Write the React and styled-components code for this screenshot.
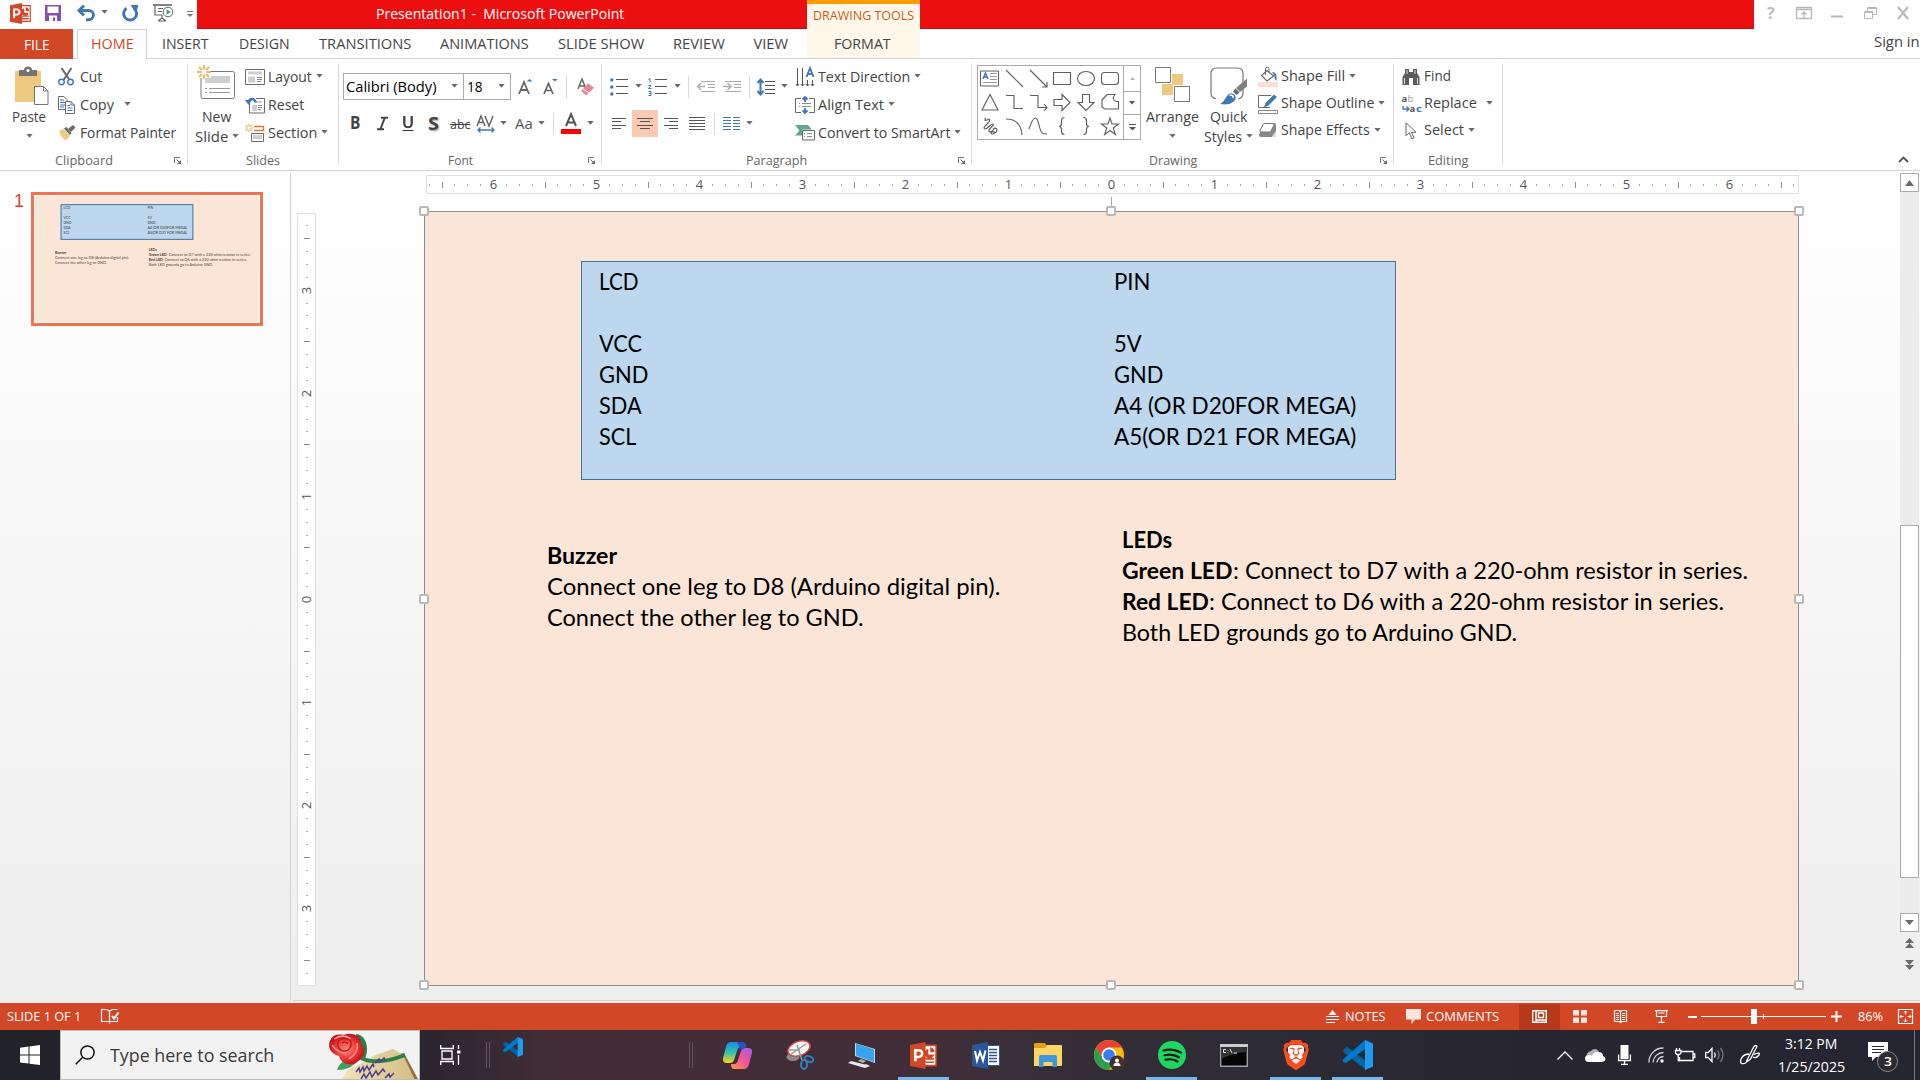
import React, { useLayoutEffect, useRef, useState } from "react";
import styled, { createGlobalStyle, css } from "styled-components";
import { SiBrave } from "react-icons/si";

const Global = createGlobalStyle`
  body { margin: 0; background: #fff; overflow: hidden; }
  * { box-sizing: border-box; }
  svg { display: block; flex-shrink: 0; overflow: visible; }
`;

/* ---------- text ---------- */

const UI = '"Open Sans", "Noto Sans", sans-serif';
const BODY = 'Lato, "Open Sans", sans-serif';

const TextBox = styled.span`
  display: block;
  flex-shrink: 0;
  width: ${(p) => p.$w}px;
  margin-left: ${(p) => p.$l || 0}px;
  margin-top: ${(p) => p.$dy || 0}px;
  color: ${(p) => p.$c || "#444"};
  font: ${(p) => p.$weight || 400} ${(p) => p.$s || 14.5}px ${(p) => p.$f || UI};
  line-height: ${(p) => p.$lh || 20}px;
  height: ${(p) => p.$lh || 20}px;
  white-space: pre;
`;
const TextRun = styled.span`
  display: inline-block;
  transform-origin: 0 50%;
`;

function T({ w, l, c, s, f, lh, dy, weight, children }) {
  const ref = useRef(null);
  const [k, setK] = useState(1);
  useLayoutEffect(() => {
    setK(w / ref.current.offsetWidth);
  }, [w]);
  return (
    <TextBox $w={w} $l={l} $c={c} $s={s} $f={f} $lh={lh} $dy={dy} $weight={weight}>
      <TextRun ref={ref} style={{ transform: `scaleX(${k})` }}>{children}</TextRun>
    </TextBox>
  );
}

/* ---------- small shared parts ---------- */

const Slot = styled.div`
  flex-shrink: 0;
  margin-left: ${(p) => p.$l || 0}px;
  width: ${(p) => p.$w}px;
  height: ${(p) => (p.$h ? p.$h + "px" : "auto")};
  display: flex;
  align-items: center;
  justify-content: center;
  background: ${(p) => p.$bg || "transparent"};
`;
const CaretBox = styled.svg`
  margin-left: ${(p) => p.$l || 0}px;
  margin-top: -2px;
`;
const Caret = ({ l, c = "#6a6a6a" }) => (
  <CaretBox $l={l} width="7" height="4" viewBox="0 0 7 4"><path d="M.3 0h6.400L3.500 3.700z" fill={c} /></CaretBox>
);
const Divider = styled.div`
  flex-shrink: 0;
  width: 1px;
  height: 22px;
  margin-left: ${(p) => p.$l}px;
  background: #dadada;
`;
const G = ({ w, h, vb, children, ...r }) => (
  <svg width={w} height={h} viewBox={vb || `0 0 ${w} ${h}`} fill="none" {...r}>{children}</svg>
);

/* ---------- title bar ---------- */

const App0 = styled.div`
  width: 1920px;
  height: 1080px;
  display: flex;
  flex-direction: column;
  overflow: hidden;
  background: #fff;
`;
const TitleBar = styled.header`
  height: 29px;
  display: flex;
`;
const Quick = styled.div`
  width: 197px;
  display: flex;
  align-items: center;
  padding-bottom: 3px;
`;
const RedBar = styled.div`
  width: 1557px;
  background: #eb0f0f;
  border-bottom: 1px solid #c40a10;
  display: flex;
  padding-top: 4px;
`;
const ContextCaption = styled.div`
  width: 113px;
  height: 29px;
  margin: -4px 0 0 183px;
  border-top: 4px solid #ff9c00;
  background: #fff7ea;
  padding: 2px 0 0 6px;
`;
const WinButtons = styled.div`
  flex: 1;
  display: flex;
  align-items: center;
  padding-bottom: 3px;
`;

const PptIcon = ({ s = 21 }) => (
  <G w={s} h={s} vb="0 0 28 28">
    <path d="M15 3.5h12v21H15z" fill="#fff" stroke="#d24726" strokeWidth="1.6" />
    <path d="M19 7v6h6a5 5 0 1 1-6-6zM21 5.500a5 5 0 0 1 4.500 5H21z" fill="#d24726" />
    <path d="M16 17.500h9M16 21h9" stroke="#d24726" strokeWidth="1.700" />
    <path d="M0 3l16-3v28L0 25z" fill="#d24726" />
    <path d="M5.500 20V8.500h3.600a3.500 3.500 0 0 1 0 7H5.500" stroke="#fff" strokeWidth="2.600" />
  </G>
);

function Title() {
  return (
    <TitleBar>
      <Quick>
        <Slot $l={10} $w={21}><PptIcon /></Slot>
        <Slot $l={14} $w={16}>
          <G w={16} h={16}><path d="M0 0h16v16H0z" fill="#8552a5" /><path d="M2.500 1.500h11v6.500h-11zM4 10.500h8v5.500h-2v-3.500H8V16H4z" fill="#fff" /></G>
        </Slot>
        <Slot $l={16} $w={19}>
          <G w={19} h={16}><path d="M2 5.500h9.500a5 4.600 0 0 1 0 9.200H9" stroke="#3f78b5" strokeWidth="2.900" /><path d="M7 .5L2 5.500l5 5" stroke="#3f78b5" strokeWidth="2.900" /></G>
        </Slot>
        <Caret l={5} />
        <Slot $l={14} $w={17}>
          <G w={17} h={17}><path d="M11.800 3.200A6.500 6.500 0 1 1 4.500 3.200" stroke="#3f78b5" strokeWidth="3" /><path d="M8.500 0h7.500v1.500L14 8z" fill="#3f78b5" /></G>
        </Slot>
        <Slot $l={14} $w={21}>
          <G w={21} h={18}>
            <path d="M0 1h19" stroke="#666" strokeWidth="1.600" /><path d="M2 1v10h7M5 4.500h5M5 7.500h4M9 11v4M5 17l4-3 4 3M5 17h8" stroke="#666" strokeWidth="1.200" />
            <circle cx="15" cy="8" r="4.800" fill="#fff" stroke="#666" /><path d="M13.500 5.200v5.600l4.500-2.800z" fill="#4b9c7d" />
          </G>
        </Slot>
        <Slot $l={12} $w={7}><G w={6} h={7}><path d="M0 1.500h6" stroke="#777" /><path d="M0 4h6L3 7z" fill="#777" /></G></Slot>
      </Quick>
      <RedBar>
        <T l={179} w={248} s={14.5} c="#fff">{"Presentation1 -  Microsoft PowerPoint"}</T>
        <ContextCaption><T w={101} s={12.5} c="#cf5b12">DRAWING TOOLS</T></ContextCaption>
      </RedBar>
      <WinButtons>
        <T l={13} w={8} s={16} weight={700} c="#bdbdbd">?</T>
        <Slot $l={21} $w={16}><G w={16} h={12}><path d="M.5.5h15v11H.5zM.5 2.500h15M8 11V5M5.500 7.500L8 5l2.500 2.500" stroke="#b8b8b8" strokeWidth="1.300" /></G></Slot>
        <Slot $l={19} $w={12}><G w={12} h={12}><path d="M0 9.500h12" stroke="#b8b8b8" strokeWidth="2" /></G></Slot>
        <Slot $l={21} $w={13}><G w={13} h={12}><path d="M.5 5h8v6.500h-8zM3.500 5V1h9v6.500h-4" stroke="#b8b8b8" /><path d="M.5 5h8M3.500 1h9" stroke="#b8b8b8" strokeWidth="2" /></G></Slot>
        <Slot $l={20} $w={12}><G w={12} h={12}><path d="M1 0l10 12M11 0L1 12" stroke="#b8b8b8" strokeWidth="2" /></G></Slot>
      </WinButtons>
    </TitleBar>
  );
}

/* ---------- tabs ---------- */

const TabRow = styled.nav`
  height: 30px;
  display: flex;
  border-bottom: 1px solid #d2d2d2;
`;
const Tab = styled.div`
  width: ${(p) => p.$w}px;
  height: ${(p) => (p.$kind ? 30 : 29)}px;
  display: flex;
  justify-content: center;
  padding-top: 4px;
  ${(p) => p.$kind === "file" && css`background: #d24726; margin-right: 4px; padding-top: 5px;`}
  ${(p) => p.$kind === "active" && css`background: #fff; border: 1px solid #d2d2d2; border-bottom: 0; padding-top: 3px;`}
  ${(p) => p.$kind === "context" && css`background: #fff7ea; margin-left: 5px; height: 29px; padding-right: 2px;`}
`;
const SignIn = styled.div`
  margin-left: auto;
  padding-top: 3px;
`;
const TABS = [
  ["FILE", 73, 26, "file", "#fff"], ["HOME", 70, 43, "active", "#d24726"], ["INSERT", 76, 47],
  ["DESIGN", 82, 51], ["TRANSITIONS", 120, 92], ["ANIMATIONS", 119, 89], ["SLIDE SHOW", 114, 86],
  ["REVIEW", 82, 52], ["VIEW", 62, 35], ["FORMAT", 113, 57, "context"],
];
const Tabs = () => (
  <TabRow>
    {TABS.map(([t, w, tw, kind, c]) => (
      <Tab key={t} $w={w} $kind={kind}><T w={tw} s={14.7} c={c}>{t}</T></Tab>
    ))}
    <SignIn><T w={46}>Sign in</T></SignIn>
  </TabRow>
);

/* ---------- ribbon ---------- */

const RibbonBox = styled.section`
  height: 112px;
  padding-top: 4px;
  display: flex;
  border-bottom: 1px solid #d2d2d2;
`;
const GroupBox = styled.div`
  width: ${(p) => p.$w}px;
  height: 102px;
  border-right: 1px solid #dcdcdc;
  flex-shrink: 0;
`;
const GroupBody = styled.div`
  height: 90px;
  display: flex;
  align-items: flex-start;
`;
const GroupFoot = styled.div`
  height: 14px;
  display: flex;
  align-items: center;
  padding-right: 6px;
`;
const Launcher = styled.svg`
  margin-left: auto;
`;
const Group = ({ w, label, at, lw, more = true, children }) => (
  <GroupBox $w={w}>
    <GroupBody>{children}</GroupBody>
    <GroupFoot>
      <T l={at} w={lw} s={13} c="#666" lh={16}>{label}</T>
      {more && <Launcher width="7" height="7" viewBox="0 0 7 7"><path d="M.5 6V.5H6" stroke="#777" fill="none" /><path d="M7 3v4H3z" fill="#666" /><path d="M2.500 2.500L6 6" stroke="#666" /></Launcher>}
    </GroupFoot>
  </GroupBox>
);
const Big = styled.div`
  width: ${(p) => p.$w}px;
  margin-left: ${(p) => p.$l}px;
  display: flex;
  flex-direction: column;
  align-items: center;
  flex-shrink: 0;
`;
const BigIcon = styled.div`
  height: 44px;
  padding-top: ${(p) => p.$t || 4}px;
  padding-left: ${(p) => p.$x || 0}px;
`;
const Line = styled.div`
  height: 20px;
  display: flex;
  align-items: center;
`;
const Col = styled.div`
  margin-left: ${(p) => p.$l || 0}px;
  flex-shrink: 0;
  width: ${(p) => (p.$w ? p.$w + "px" : "auto")};
`;
const CmdBox = styled.div`
  height: ${(p) => p.$h}px;
  display: flex;
  align-items: center;
`;
const Cmd = ({ icon, iw = 20, gap = 3, dy = 0, label, w, caret, h = 28 }) => (
  <CmdBox $h={h}>
    <Slot $w={iw}>{icon}</Slot>
    <T l={gap} w={w} dy={dy}>{label}</T>
    {caret && <Caret l={caret} />}
  </CmdBox>
);
const Tools = styled.div`
  height: 27px;
  display: flex;
  align-items: center;
  margin-top: 10px;
`;
const Combo = styled.div`
  width: ${(p) => p.$w}px;
  height: 27px;
  margin-left: ${(p) => p.$l}px;
  border: 1px solid #ababab;
  display: flex;
  align-items: center;
  justify-content: space-between;
  padding: 0 5px 0 ${(p) => p.$p}px;
  flex-shrink: 0;
`;
const gy = "#6a6a6a";
const bl = "#3f78b5";

const PasteIcon = (
  <G w={35} h={38}>
    <path d="M1 4h26v31H1z" fill="#edc87e" />
    <path d="M5 3h5a4 3.500 0 0 1 8 0h5v6H5z" fill="#737373" /><circle cx="14" cy="3.500" r="1.500" fill="#fff" />
    <path d="M20.500 19.500h9l4.500 4.500v13.500H20.500z" fill="#fff" stroke="#737373" /><path d="M29.500 19.500V24H34" stroke="#737373" />
  </G>
);
const CutIcon = (
  <G w={17} h={18}><path d="M3.500 0l8 12M13.500 0l-8 12" stroke={gy} strokeWidth="2" /><circle cx="3.500" cy="14" r="2.700" stroke={bl} strokeWidth="1.400" /><circle cx="12.500" cy="14" r="2.700" stroke={bl} strokeWidth="1.400" /></G>
);
const CopyIcon = (
  <G w={17} h={18}>
    <path d="M.5.5h5.500l3 3v10H.5z" fill="#fff" stroke={gy} /><path d="M2 4h4M2 6.500h5M2 9h5M2 11h4" stroke={bl} />
    <path d="M7.500 5.500H13l3.500 3.500v8.500h-9z" fill="#fff" stroke={gy} /><path d="M13 5.500V9h3.500" stroke={gy} /><path d="M9.500 9.500h2.500M9.500 12h5M9.500 14.500h5" stroke={bl} />
  </G>
);
const PainterIcon = (
  <G w={18} h={16}><path d="M1 6l5-2 6 7-4 4.500C5 14 2.500 11 1 6z" fill="#edc87e" /><path d="M6 3.500l2.500-1.500 5 6-1.500 2z" fill={gy} /><path d="M10 4l5-4 2.500 2.500L13 7z" fill={gy} /></G>
);
const Sun = ({ x, y, s = 1 }) => (
  <path transform={`translate(${x} ${y}) scale(${s})`} d="M0-7V-2.500M0 7V2.500M-7 0H-2.500M7 0H2.500M-5-5L-2-2M5 5L2 2M5-5L2-2M-5 5L-2 2" stroke="#e9b765" strokeWidth="1.900" />
);
const NewSlideIcon = (
  <G w={39} h={35}>
    <rect x="4" y="6.500" width="33.500" height="27" rx="2" fill="#fff" stroke="#777" /><path d="M8 11h25v7H8z" fill="#cfcfcf" />
    <path d="M8 23.500h2M12 23.500h21M8 27.500h2M12 27.500h21" stroke="#999" />
    <path d="M0 2h14v11H0z" fill="#fff" /><Sun x={7} y={7} />
  </G>
);
const LayoutIcon = (
  <G w={20} h={16}><path d="M.5.500h19v15H.5z" stroke={gy} /><path d="M3 2.500h14v3H3zM3 7.500h7v6H3z" fill="#cfcfcf" /><path d="M12 8.500h5M12 10.500h5M12 12.500h4" stroke="#888" /></G>
);
const ResetIcon = (
  <G w={20} h={17}><path d="M4.500 5v11h15V1.500H11" stroke={gy} /><path d="M11 4h6v2h-6zM7 8h5v6H7z" fill="#cfcfcf" /><path d="M13 8.500h4M13 10.500h4M13 12.500h3" stroke="#888" /><path d="M11 5.500C9 .5 4.500 1 3.500 5" stroke={bl} strokeWidth="2.200" /><path d="M0 3h7L3.500 8z" fill={bl} /></G>
);
const SectionIcon = (
  <G w={20} h={18}><path d="M9 2.500h9.500v4H9" stroke="#e0792c" strokeWidth="1.400" /><Sun x={4} y={4} s={0.6} /><path d="M6.500 9.500h12v8h-12z" stroke={gy} /><path d="M8 11h9v4H8z" fill="#cfcfcf" /></G>
);
const lines = (arr, c = "#555") => arr.map(([x1, x2, y], i) => <path key={i} d={`M${x1} ${y}.5H${x2}`} stroke={c} strokeWidth="1" />);

function Ribbon() {
  return (
    <RibbonBox>
      <Group w={188} label="Clipboard" at={55} lw={58}>
        <Big $l={5} $w={48}>
          <BigIcon $x={4}>{PasteIcon}</BigIcon>
          <Line><T w={34}>Paste</T></Line>
          <Line><Caret /></Line>
        </Big>
        <Col $l={5}>
          <Cmd iw={17} gap={5} icon={CutIcon} label="Cut" w={22} />
          <Cmd iw={17} gap={5} icon={CopyIcon} label="Copy" w={34} caret={10} dy={-1} />
          <Cmd iw={18} gap={4} icon={PainterIcon} label="Format Painter" w={96} />
        </Col>
      </Group>

      <Group w={151} label="Slides" at={58} lw={34} more={false}>
        <Big $l={6} $w={45}>
          <BigIcon $t={2}>{NewSlideIcon}</BigIcon>
          <Line><T w={29}>New</T></Line>
          <Line><T w={33}>Slide</T><Caret l={4} /></Line>
        </Big>
        <Col $l={6}>
          <Cmd icon={LayoutIcon} label="Layout" w={44} caret={4} />
          <Cmd icon={ResetIcon} label="Reset" w={36} dy={-1} />
          <Cmd icon={SectionIcon} label="Section" w={49} caret={4} />
        </Col>
      </Group>

      <Group w={263} label="Font" at={109} lw={25}>
        <Col>
          <Tools>
            <Combo $w={121} $l={4} $p={2}><T w={91} c="#000" s={14.5}>Calibri (Body)</T><Caret /></Combo>
            <Combo $w={48} $l={-1} $p={3}><T w={16} c="#000">18</T><Caret /></Combo>
            <Slot $l={7} $w={15}><G w={15} h={16}><path d="M1 15L6 3l5 12M2.800 11h6.400" stroke="#666" strokeWidth="1.800" /><path d="M8.500 2.500L11.500 0l3 2.500z" fill={bl} /></G></Slot>
            <Slot $l={10} $w={15}><G w={15} h={16}><path d="M1 15L5.500 4.500 10 15M2.600 11.500h5.800" stroke="#666" strokeWidth="1.700" /><path d="M9 0h5.500l-2.700 2.500z" fill={bl} /></G></Slot>
            <Divider $l={8} />
            <Slot $l={9} $w={18}><G w={17} h={18}><path d="M1 11L5 1l4 10M2.500 8h5" stroke="#666" strokeWidth="1.500" /><path d="M11 5.500l6 4-7.500 8L4 13z" fill="#e8849a" /><path d="M6 11l6 4" stroke="#fff" /></G></Slot>
          </Tools>
          <Tools>
            <T l={11} w={10} weight={700} s={17} dy={-2}>B</T>
            <Slot $l={17} $w={11}><G w={11} h={13}><path d="M4 .8h7M0 12.200h7M7.700 1L3.500 12" stroke="#444" strokeWidth="2" /></G></Slot>
            <Slot $l={13} $w={13}><G w={12} h={16}><path d="M2.300 0v7.500a3.700 3.700 0 0 0 7.400 0V0" stroke="#444" strokeWidth="2.300" /><path d="M.5 14.500h11" stroke="#444" strokeWidth="1.200" /></G></Slot>
            <Shadowed><T l={14} w={11} weight={700} s={18} dy={-2}>S</T></Shadowed>
            <Slot $l={11} $w={20}><T w={20} s={13}><s>abc</s></T></Slot>
            <Slot $l={7} $w={18}><G w={18} h={18}><path d="M0 11L4 1l4 10M1.500 7.500h5M8 1l4 10 4-10" stroke="#666" strokeWidth="1.500" /><path d="M1 15h16M3.500 12.500L1 15l2.500 2.500M14.500 12.500L17 15l-2.500 2.500" stroke={bl} strokeWidth="1.300" /></G></Slot>
            <Caret l={5} />
            <T l={8} w={18} s={15} c="#555" dy={-2}>Aa</T>
            <Caret l={5} />
            <Divider $l={8} />
            <Slot $l={7} $w={20}><G w={20} h={20}><path d="M5 12L10 0l5 12M6.500 8.500h7" stroke="#555" strokeWidth="2" /><path d="M0 15h20v5H0z" fill="#f00" /></G></Slot>
            <Caret l={6} />
          </Tools>
        </Col>
      </Group>

      <Group w={370} label="Paragraph" at={144} lw={61}>
        <Col $w={193}>
          <Tools>
            <Slot $l={8} $w={18}><G w={18} h={18}>{[2, 9, 16].map((y) => <circle key={y} cx="1.800" cy={y} r="1.700" fill={bl} />)}{lines([[6, 18, 1], [6, 18, 8], [6, 18, 15]])}</G></Slot>
            <Caret l={7} />
            <Slot $l={6} $w={19}><G w={19} h={18}><path d="M.5 1.500L2 .5v4M.5 7.500h2.500L.5 10.500H3.500M.5 13.500h2.500v4H.5M1 15.500h2" stroke={bl} />{lines([[7, 19, 1], [7, 19, 8], [7, 19, 15]])}</G></Slot>
            <Caret l={7} />
            <Divider $l={7} />
            <Slot $l={8} $w={18}><G w={18} h={12}><path d="M0 5.500h8M4 2L.7 5.500 4 9" stroke="#b0b0b0" strokeWidth="1.600" />{lines([[4, 18, 0], [11, 18, 3], [11, 18, 6], [4, 18, 10]], "#a9a9a9")}</G></Slot>
            <Slot $l={8} $w={18}><G w={18} h={12}><path d="M0 5.500h8M4.500 2L8 5.500 4.500 9" stroke="#b0b0b0" strokeWidth="1.600" />{lines([[2, 18, 0], [11, 18, 3], [11, 18, 6], [2, 18, 10]], "#a9a9a9")}</G></Slot>
            <Divider $l={8} />
            <Slot $l={7} $w={18}><G w={18} h={18}><path d="M3.500 2v14M.5 5l3-3.500 3 3.500M.5 13l3 3.500 3-3.500" stroke={bl} strokeWidth="2" />{lines([[8, 18, 3], [8, 18, 7], [8, 18, 11], [8, 18, 15]])}</G></Slot>
            <Caret l={6} />
          </Tools>
          <Tools>
            <Slot $l={10} $w={14}><G w={14} h={11}>{lines([[0, 14, 0], [0, 9, 3], [0, 14, 7], [0, 9, 10]])}</G></Slot>
            <Slot $l={6} $w={26} $h={27} $bg="#fbcab3"><G w={16} h={11}>{lines([[0, 16, 0], [3, 13, 3], [0, 16, 7], [3, 13, 10]])}</G></Slot>
            <Slot $l={6} $w={14}><G w={14} h={11}>{lines([[0, 14, 0], [5, 14, 3], [0, 14, 7], [5, 14, 10]])}</G></Slot>
            <Slot $l={11} $w={16}><G w={16} h={13}>{lines([[0, 16, 0], [0, 16, 3], [0, 16, 6], [0, 16, 9], [0, 16, 12]])}</G></Slot>
            <Divider $l={9} />
            <Slot $l={8} $w={17}><G w={17} h={13}>{lines([0, 3, 6, 9, 12].flatMap((y) => [[0, 8, y], [10, 17, y]]), bl)}</G></Slot>
            <Caret l={6} />
          </Tools>
        </Col>
        <Col>
          <Cmd label="Text Direction" w={92} caret={4} icon={<G w={20} h={20}><path d="M2.500 1v18M7.500 1v18M12.500 13v6M17.500 13v6" stroke="#555" /><path d="M.8 17L2.500 19l1.700-2M5.800 17l1.700 2 1.700-2M10.800 17l1.700 2 1.700-2M15.800 17l1.700 2 1.700-2" stroke="#555" /><path d="M11.500 10L15 1l3.500 9M12.700 7h4.600" stroke={bl} strokeWidth="1.900" /></G>} />
          <Cmd label="Align Text" w={66} caret={4} dy={-1} icon={<G w={20} h={18}><path d="M6 2.500H.5v14H6M14 2.500h5.500v14H14" stroke={gy} />{lines([[4, 5, 7], [7, 16, 7], [4, 5, 10], [7, 16, 10]], "#888")}<path d="M10 1v5M10 17v-5M7.500 3.500L10 1l2.500 2.500M7.500 14.500L10 17l2.500-2.500" stroke={bl} strokeWidth="1.900" /></G>} />
          <Cmd label="Convert to SmartArt" w={132} caret={4} icon={<G w={20} h={16}><path d="M0 0h13l4 4.500H7v6H0l4.500-5z" fill="#62a68c" /><path d="M7.500 5.500h12v9.500h-12z" fill="#fff" stroke={gy} />{lines([[9, 10, 8], [12, 17, 8], [9, 10, 11], [12, 17, 11]], "#888")}</G>} />
        </Col>
      </Group>

      <Group w={422} label="Drawing" at={177} lw={48}>
        <Gallery />
        <Big $l={1} $w={60}>
          <BigIcon $x={1}><G w={35} h={35}><path d="M17 7h11v11H17zM7 17h11v11H7z" fill="#edc87e" /><path d="M.5.500h15v15H.5zM19.500 19.500h15v15h-15z" fill="#fff" stroke="#777" /></G></BigIcon>
          <Line><T w={53}>Arrange</T></Line>
          <Line><Caret /></Line>
        </Big>
        <Big $w={52}>
          <BigIcon $x={2}><G w={38} h={38}>
            <path d="M6 31.500a5 5 0 0 1-5-5V6a5 5 0 0 1 5-5h22a5 5 0 0 1 5 5v20q0 5-5 6" stroke="#777" strokeWidth="1.200" />
            <path d="M37 11.500v8L30 25l-4-4z" fill="#808080" /><path d="M25.500 21.500l4 4-3 2.500-3.500-3.500z" fill="#666" />
            <path d="M10 37c5-2 5-8 10-10.500 4-1 7 3 5 6.500-3 4.500-10 5-15 4z" fill={bl} /><path d="M19.500 28.500c2.500-1.500 4 .5 3.500 2.500" stroke="#fff" strokeWidth="1.600" />
          </G></BigIcon>
          <Line><T w={37}>Quick</T></Line>
          <Line><T w={38}>Styles</T><Caret l={4} /></Line>
        </Big>
        <Col $l={4}>
          <Cmd h={27} dy={-2} label="Shape Fill" w={64} caret={4} icon={<G w={20} h={20}><path d="M0 15h20v5H0z" fill="#fbe0cf" /><path d="M9 3.500L15.500 9 9 14 3.500 8.500z" fill="#fff" stroke={gy} strokeWidth="1.200" /><path d="M7.500 8V2a1.800 1.800 0 0 1 3.600 0v3" stroke={gy} /><path d="M14 5c4 0 5 3 4.500 9-1.500-1-2-3-2-5z" fill={bl} /></G>} />
          <Cmd h={27} dy={-2} label="Shape Outline" w={93} caret={4} icon={<G w={20} h={20}><path d="M13 1.500H.5v12H12" stroke={gy} /><path d="M.5 16.500h19v3H.5z" fill="#fff" stroke="#888" /><path d="M6 13.500l1.500-4.500L16 .5l3 2.500-8.500 8.500z" fill={bl} /></G>} />
          <Cmd h={27} dy={-2} label="Shape Effects" w={89} caret={4} icon={<G w={20} h={18}><path d="M5 3h13v12H5z" fill="#ddd" /><path d="M6.500 1h9.500a2 2 0 0 1 2 2v6l-4.500 6H3a2 2 0 0 1-2-2.500z" fill="#888" /><path d="M6.500 1.500H15q1.500 0 1 1.500l-3 6q-.5 1-1.500 1H3Q1.500 10 2 8.500l3-6q.5-1 1.500-1z" fill="#fff" stroke="#777" /></G>} />
        </Col>
      </Group>

      <Group w={109} label="Editing" at={34} lw={40} more={false}>
        <Col $l={7}>
          <Cmd h={27} dy={-2} label="Find" w={27} icon={<G w={18} h={16}><path d="M3 0h4v3h4V0h4v4l2.500 4v8H11V9H7v7H.5V8L3 4z" fill="#5c5c5c" /><path d="M5 1v4M13 1v4M2.500 9v6M15.500 9v6" stroke="#ddd" /></G>} />
          <Cmd h={27} dy={-2} label="Replace" w={53} caret={9} icon={<ReplaceIcon />} />
          <Cmd h={27} dy={-2} label="Select" w={40} caret={4} icon={<G w={12} h={18}><path d="M1 .8v13l3.300-3 2.500 6 2.200-1-2.500-5.500H11z" fill="#fff" stroke="#666" /></G>} />
        </Col>
      </Group>
      <Collapse><G w={11} h={7}><path d="M1 6l4.500-4.500L10 6" stroke="#555" strokeWidth="1.800" /></G></Collapse>
    </RibbonBox>
  );
}
const Shadowed = styled.div`
  text-shadow: 1px 1px 2px #999;
`;
const Collapse = styled.div`
  margin: 93px 11px 0 auto;
`;
const Stack = styled.div`
  width: 19px;
  height: 20px;
`;
const StackLine = styled.div`
  display: flex;
  height: 10px;
  align-items: center;
`;
const ReplaceIcon = () => (
  <Stack>
    <StackLine><T w={6} s={9.500} weight={700} lh={10} c="#555">a</T><T w={6} s={9.500} lh={10} c="#999">b</T></StackLine>
    <StackLine><G w={8} h={6}><path d="M1 0v3h6M4.500.5L7 3 4.500 5.500" stroke={bl} strokeWidth="1.300" /></G><T w={6} s={9.500} weight={700} lh={10} c="#555">a</T><T w={6} s={9.500} weight={700} lh={10} c={bl}>c</T></StackLine>
  </Stack>
);

/* shape gallery */
const GalleryBox = styled.div`
  width: 164px;
  height: 75px;
  margin: 2px 0 0 5px;
  border: 1px solid #ababab;
  display: flex;
  flex-shrink: 0;
`;
const ShapeGrid = styled.div`
  width: 145px;
  display: grid;
  grid-template-columns: repeat(6, 24px);
  grid-template-rows: repeat(3, 24px);
`;
const GalleryScroll = styled.div`
  width: 17px;
  border-left: 1px solid #ababab;
  display: grid;
  grid-template-rows: 25px 23px 25px;
  div { display: flex; align-items: center; justify-content: center; }
  div + div { border-top: 1px solid #ababab; }
`;
const SHAPES = [
  null,
  "M4 4l17 17", "M4 4l17 17M21 16v5h-5", "M3.500 6.500h17v12h-17z", "M3.500 12.500a8.500 7 0 1 0 17 0a8.500 7 0 1 0-17 0",
  "M6.500 6.500h11a3 3 0 0 1 3 3v6a3 3 0 0 1-3 3h-11a3 3 0 0 1-3-3v-6a3 3 0 0 1 3-3z",
  "M12 4.500l8 15.500H4z", "M4 5.500h8v13h9", "M4 5.500h8v12h9M18 14l3 3.500-3 3.500", "M4 9.500h8V4.500l8 8-8 8v-5H4z",
  "M8.500 4.500h7v8h4.500l-8 8-8-8h4.500z", "M4 10l5-5.500h8q-4 5 1 7h2.500v7.500H6.500L4 17z",
  "M8 4c-2 2-1 3 1 2 3-2 4 0 1 3-4 4-5 5-3 6 3 0 5-5 8-5 2 1-3 4-4 6-1 3 3 2 4 0 1-3 4-2 4 0-1 4-6 5-6 3 0-1 3-2 4 0", "M4 5q15 0 16 16",
  "M3 15C8 0 11 2 13 11s4 9 8 9", "M14.500 3.500q-3 0-3 3v3q0 3-2.500 3 2.500 0 2.500 3v2q0 3 3 3", "M9.500 3.500q3 0 3 3v3q0 3 2.500 3-2.500 0-2.500 3v2q0 3-3 3",
  "M12 4l2 6h6.500l-5.200 4 2 6.500-5.300-4-5.300 4 2-6.500-5.200-4H10z",
];
const Gallery = () => (
  <GalleryBox>
    <ShapeGrid>
      {SHAPES.map((d, i) => d ? <G key={i} w={24} h={24}><path d={d} stroke="#606060" strokeWidth="1.150" /></G> : (
        <G key={i} w={24} h={24}><path d="M2.500 5h18v15h-18z" stroke="#606060" /><path d="M5 13l2.500-6L10 13M6 11h3" stroke={bl} strokeWidth="1.500" />{lines([[12, 19, 7], [12, 19, 10], [12, 19, 13], [5, 19, 16]], "#999")}</G>
      ))}
    </ShapeGrid>
    <GalleryScroll>
      <div><G w={5} h={3}><path d="M0 3h5L2.500 0z" fill="#b5b5b5" /></G></div>
      <div><G w={6} h={4}><path d="M0 0h6L3 3.500z" fill="#555" /></G></div>
      <div><G w={7} h={7}><path d="M0 .5h7" stroke="#555" /><path d="M0 3h7L3.500 6.500z" fill="#555" /></G></div>
    </GalleryScroll>
  </GalleryBox>
);

/* ---------- workspace ---------- */

const Work = styled.main`
  height: 832px;
  display: flex;
  background: linear-gradient(#fff 0, #fdfdfd 12%, #efefef 92%, #eeeeee 100%);
`;
const ThumbPane = styled.aside`
  width: 290px;
  display: flex;
  align-items: flex-start;
  padding: 21px 0 0 16px;
`;
const ThumbNo = styled.div`
  width: 15px;
`;
const ThumbFrame = styled.div`
  width: 232px;
  height: 134px;
  border: 3px solid #f07251;
  padding: 1px;
  background: #fff;
`;
const ThumbView = styled.div`
  width: 224px;
  height: 126px;
  overflow: hidden;
`;
const ThumbScale = styled.div`
  width: 1376px;
  height: 775px;
  transform: scale(0.1629);
  transform-origin: 0 0;
`;
const PaneLine = styled.div`
  width: 1px;
  margin: 2px 0 2px;
  background: #d2d2d2;
`;
const Stage = styled.div`
  width: 1609px;
  padding-top: 4px;
`;
const HRuler = styled.div`
  margin-left: 135px;
  width: 1373px;
  height: 19px;
  padding-right: 2px;
  border: 1px solid #e0e0e0;
  background: #fff;
  display: flex;
  justify-content: center;
  align-items: center;
  overflow: hidden;
`;
const VRuler = styled.div`
  margin: 2px 0 0 6px;
  width: 19px;
  height: 773px;
  border: 1px solid #e0e0e0;
  background: #fff;
  display: flex;
  flex-direction: column;
  justify-content: center;
  align-items: center;
  overflow: hidden;
`;
const Cell = styled.div`
  flex: 0 0 12.88px;
  display: flex;
  align-items: center;
  justify-content: center;
`;
const Tick = styled.i`
  width: ${(p) => (p.$v ? (p.$half ? 6 : 2) : 1)}px;
  height: ${(p) => (p.$v ? 1 : p.$half ? 6 : 2)}px;
  background: ${(p) => (p.$half ? "#8a8a8a" : "#aaa")};
`;
const Num = styled.span`
  font: 13px/13px ${UI};
  color: #555;
  transform: ${(p) => (p.$v ? "rotate(-90deg)" : "none")};
`;
const ticks = (n, v) => Array.from({ length: 2 * n + 1 }, (_, i) => {
  const k = Math.abs(i - n);
  return <Cell key={i}>{k % 8 === 0 ? <Num $v={v}>{k / 8}</Num> : <Tick $v={v} $half={k % 4 === 0} />}</Cell>;
});
const StageRow = styled.div`
  display: flex;
  margin-top: 17px;
`;
const SlideWrap = styled.div`
  position: relative;
  margin-left: 108px;
  width: 1375px;
  height: 775px;
`;
const SlideFace = styled.div`
  position: relative;
  width: 1375px;
  height: 775px;
  background: #fbe5d6;
  border: 1px solid ${(p) => (p.$thumb ? "#fbe5d6" : "#8e8e8e")};
`;
const PinBox = styled.div`
  position: absolute;
  left: 156px;
  top: 49px;
  width: 815px;
  height: 219px;
  background: #bdd7ee;
  border: ${(p) => (p.$thumb ? 6 : 1)}px solid #41719c;
`;
const TextFrame = styled.div`
  position: absolute;
  left: ${(p) => p.$x}px;
  top: ${(p) => p.$y}px;
  opacity: ${(p) => (p.$thumb ? 0.75 : 1)};
`;
const Para = styled.div`
  display: flex;
  height: 31px;
`;
const P = ({ w, b, children }) => <T w={w} s={22.8} lh={31} c="#000" f={BODY} weight={b ? 700 : 400}>{children}</T>;
function Slide({ thumb }) {
  return (
    <SlideFace $thumb={thumb}>
      <PinBox $thumb={thumb} />
      <TextFrame $thumb={thumb} $x={174} $y={54}>
        <P w={40}>LCD</P><Para /><P w={43}>VCC</P><P w={49}>GND</P><P w={43}>SDA</P><P w={37}>SCL</P>
      </TextFrame>
      <TextFrame $thumb={thumb} $x={689} $y={54}>
        <P w={36}>PIN</P><Para /><P w={28}>5V</P><P w={49}>GND</P><P w={242}>A4 (OR D20FOR MEGA)</P><P w={242}>A5(OR D21 FOR MEGA)</P>
      </TextFrame>
      <TextFrame $thumb={thumb} $x={122} $y={328}>
        <P w={70} b>Buzzer</P><P w={453}>Connect one leg to D8 (Arduino digital pin).</P><P w={317}>Connect the other leg to GND.</P>
      </TextFrame>
      <TextFrame $thumb={thumb} $x={697} $y={312}>
        <P w={50} b>LEDs</P>
        <Para><P w={111} b>Green LED</P><P w={515}>: Connect to D7 with a 220-ohm resistor in series.</P></Para>
        <Para><P w={87} b>Red LED</P><P w={515}>: Connect to D6 with a 220-ohm resistor in series.</P></Para>
        <P w={395}>Both LED grounds go to Arduino GND.</P>
      </TextFrame>
    </SlideFace>
  );
}
const Handle = styled.i`
  position: absolute;
  left: ${(p) => p.$x - 5}px;
  top: ${(p) => p.$y - 5}px;
  width: 10px;
  height: 10px;
  background: #fff;
  border: 2px solid #b9b9b9;
  border-radius: 2px;
`;
const Stem = styled.i`
  position: absolute;
  left: 687px;
  top: -14px;
  width: 1px;
  height: 10px;
  background: #aaa;
`;
const StageFoot = styled.div`
  margin: 14px 0 0 2px;
  height: 1px;
  width: 1627px;
  background: #d2d2d2;
`;
const Scroll = styled.div`
  width: 19px;
  height: 758px;
  margin-top: 2px;
  background: #ececec;
`;
const ScrollBtn = styled.div`
  width: 19px;
  height: 19px;
  border: 1px solid #ababab;
  background: #fff;
  display: flex;
  align-items: center;
  justify-content: center;
`;
const ScrollThumb = styled.div`
  margin: 333px 0 35px;
  width: 19px;
  height: 353px;
  border: 1px solid #ababab;
  background: #fff;
`;
const PageArrows = styled.div`
  display: flex;
  flex-direction: column;
  align-items: center;
  gap: 12px;
  padding-top: 6px;
`;

function Workspace() {
  return (
    <Work>
      <ThumbPane>
        <ThumbNo><T w={10} l={-2} dy={1} s={18} c="#d24726" lh={17} f={'"Liberation Sans", sans-serif'}>1</T></ThumbNo>
        <ThumbFrame><ThumbView><ThumbScale><Slide thumb /></ThumbScale></ThumbView></ThumbFrame>
      </ThumbPane>
      <PaneLine />
      <Stage>
        <HRuler>{ticks(53)}</HRuler>
        <StageRow>
          <VRuler>{ticks(29, true)}</VRuler>
          <SlideWrap>
            <Slide />
            <Stem />
            {[[0, 0], [687, 0], [1375, 0], [0, 388], [1375, 388], [0, 774], [687, 774], [1375, 774]].map(([x, y]) => <Handle key={`${x}-${y}`} $x={x} $y={y} />)}
          </SlideWrap>
        </StageRow>
        <StageFoot />
      </Stage>
      <Scroll>
        <ScrollBtn><G w={9} h={6}><path d="M0 6h9L4.500 0z" fill="#6a6a6a" /></G></ScrollBtn>
        <ScrollThumb />
        <ScrollBtn><G w={9} h={5}><path d="M0 0h9L4.500 5z" fill="#6a6a6a" /></G></ScrollBtn>
        <PageArrows>
          <G w={9} h={10}><path d="M0 5h9L4.500 0zM0 10h9L4.500 5z" fill="#6a6a6a" /></G>
          <G w={9} h={10}><path d="M0 0h9L4.500 5zM0 5h9L4.500 10z" fill="#6a6a6a" /></G>
        </PageArrows>
      </Scroll>
    </Work>
  );
}

/* ---------- status bar ---------- */

const StatusBar = styled.footer`
  height: 27px;
  background: #d24726;
  display: flex;
  align-items: center;
`;
const ST = (p) => <T s={12.7} c="#fff" lh={18} dy={-1} {...p} />;
const Zoom = styled.div`
  width: 125px;
  height: 16px;
  margin-left: 4px;
  display: flex;
  align-items: center;
  flex-shrink: 0;
`;
const ZoomBar = styled.i`
  height: ${(p) => p.$h}px;
  width: ${(p) => p.$w}px;
  background: #fff;
`;
const w1 = { stroke: "#fff", strokeWidth: 1.2 };
const Status = () => (
  <StatusBar>
    <ST l={7} w={74}>SLIDE 1 OF 1</ST>
    <Slot $l={20} $w={18}><G w={18} h={15}><path d="M8.500 1.500v13M8.500 12.500H.5V.5h5l3 1.500 3-1.500h5M16.500 8v4.500h-8" {...w1} /><path d="M11 7l2 2.500 4.500-6" stroke="#fff" strokeWidth="2" /></G></Slot>
    <Slot $l={1207} $w={13}><G w={13} h={13}><path d="M2.500 5L6.500 0l4 5z" fill="#fff" /><path d="M0 6.500h13M0 9.500h13M0 12.500h9" {...w1} /></G></Slot>
    <ST l={6} w={40}>NOTES</ST>
    <Slot $l={21} $w={15}><G w={15} h={15}><path d="M0 0h15v10.500H9L5.500 15v-4.500H0z" fill="#fbe5de" /></G></Slot>
    <ST l={5} w={73}>COMMENTS</ST>
    <Slot $l={20} $w={41} $h={26} $bg="#b6391c"><G w={15} h={13}><path d="M.7.700h13.600v11.600H.7zM4 .7v11.600M4 10h10" stroke="#fff" strokeWidth="1.400" /><path d="M6.500 3h5v4.500h-5z" stroke="#fff" strokeWidth="1.400" /></G></Slot>
    <Slot $l={13} $w={14}><G w={14} h={13}><path d="M0 0h6v5.500H0zM8 0h6v5.500H8zM0 7.500h6V13H0zM8 7.500h6V13H8z" fill="#fbe5de" /></G></Slot>
    <Slot $l={27} $w={13}><G w={13} h={13}><path d="M.5.500h4.500l1.500 1 1.500-1h4.500v11H8l-1.500 1-1.500-1H.5zM6.500 1.500v11" {...w1} /><path d="M2 3.500h3M2 5.500h3M2 7.500h3M2 9.500h3M8 3.500h3M8 5.500h3M8 7.500h3M8 9.500h3" stroke="#fff" strokeWidth=".9" /></G></Slot>
    <Slot $l={28} $w={13}><G w={13} h={13}><path d="M0 .7h13M1.500 1v5.500h10V1M6.500 6.500V12M3.500 12.300h6M3.500 3h6" {...w1} /></G></Slot>
    <Slot $l={20} $w={9}><G w={9} h={2}><path d="M0 0h9v2H0z" fill="#fff" /></G></Slot>
    <Zoom><ZoomBar $w={50} $h={1} /><ZoomBar $w={6} $h={15} /><ZoomBar $w={6} $h={1} /><ZoomBar $w={1} $h={5} /><ZoomBar $w={62} $h={1} /></Zoom>
    <Slot $l={4} $w={12}><G w={11} h={11}><path d="M5.500 0v11M0 5.500h11" stroke="#fff" strokeWidth="2" /></G></Slot>
    <ST l={16} w={25}>86%</ST>
    <Slot $l={15} $w={15}><G w={15} h={15}><path d="M.5.500h14v14H.5z" {...w1} /><path d="M7.500 2v3.500M7.500 13V9.500M2 7.500h3.500M13 7.500H9.500M6 3.500L7.500 2 9 3.500M6 11.500L7.500 13 9 11.500M3.500 6L2 7.500 3.500 9M11.500 6L13 7.500 11.500 9" stroke="#fff" /></G></Slot>
  </StatusBar>
);

/* ---------- taskbar ---------- */

const TaskBar = styled.div`
  height: 50px;
  display: flex;
  align-items: center;
  background: linear-gradient(90deg, #22222b 0, #2a252f 22%, #432e38 29%, #412d38 48%, #372f38 54%, #2d2b36 66%, #272530 80%, #242631 100%);
`;
const Search = styled.div`
  width: 360px;
  height: 50px;
  margin-left: 20px;
  background: #f2f2f2;
  border: 1px solid #bbb;
  display: flex;
  align-items: center;
  flex-shrink: 0;
  overflow: hidden;
`;
const TaskSep = styled.i`
  width: 4px;
  height: 26px;
  margin-left: ${(p) => p.$l}px;
  border: solid #62525c;
  border-width: 0 1px;
  flex-shrink: 0;
`;
const AppBtn = styled.div`
  width: 51px;
  height: 50px;
  margin-left: ${(p) => p.$l || 11}px;
  padding-top: 3px;
  display: flex;
  align-items: center;
  justify-content: center;
  border-bottom: 3px solid ${(p) => (p.$on ? "#76b9ed" : "transparent")};
  flex-shrink: 0;
`;
const Clock = styled.div`
  margin-left: 17px;
  width: 68px;
  display: flex;
  flex-direction: column;
  align-items: center;
  gap: 4px;
  padding-bottom: 1px;
  flex-shrink: 0;
`;
const Notice = styled.div`
  position: relative;
  width: 31px;
  height: 30px;
  margin: 3px 0 0 23px;
  flex-shrink: 0;
`;
const NoticeCount = styled.div`
  position: absolute;
  left: 9px;
  top: 9px;
  width: 21px;
  height: 21px;
  border: 1px solid #8a8a8f;
  border-radius: 50%;
  background: #2b2b31;
  display: flex;
  align-items: center;
  justify-content: center;
`;
const ShowDesktop = styled.i`
  margin-left: auto;
  margin-right: 5px;
  width: 1px;
  height: 50px;
  background: #77777c;
`;
const Code = ({ s }) => (
  <G w={s} h={s} vb="0 0 30 30">
    <path d="M1 9L4 7l19 14v9L1 12.500q-1.500-1.500 0-3.500z" fill="#0065a9" />
    <path d="M0 19.500q-1 1.500.5 2.500L3 23 22 9V0z" fill="#007acc" />
    <path d="M22 0l8 3.500v23L22 30z" fill="#1f9cf0" />
  </G>
);
const Rose = () => (
  <G w={90} h={48}>
    <defs>
      <radialGradient id="petal"><stop offset="0" stopColor="#ff8a7a" /><stop offset=".6" stopColor="#f03a3a" /><stop offset="1" stopColor="#c5141c" /></radialGradient>
      <linearGradient id="paper" x1="0" x2="1"><stop offset="0" stopColor="#f2e2b5" /><stop offset="1" stopColor="#d5bd85" /></linearGradient>
    </defs>
    <path d="M62 25l13-3 14 26H70z" fill="#8d7445" /><path d="M20 38l20-9 4-4 20-7 10 6 12 25H12z" fill="url(#paper)" />
    <path d="M27 3c9 1 14 12 9 25l-6-4z" fill="#2f7d48" /><path d="M8 39c3-9 10-12 20-8-5 5-11 8-20 8z" fill="#42a060" />
    <path d="M32 27q16 8 44-3" stroke="#2f7d48" strokeWidth="4" />
    <path d="M2 8C6 1 14 5 18 3c9-1 14 4 14 10 6 6 2 15-4 18-6 5-16 2-18-6C0 22-2 14 2 8z" fill="url(#petal)" />
    <path d="M5 8q9-6 17 0M3 14q5 8 14 8M28 12q2 10-8 16" stroke="#ffaba0" strokeWidth="1.300" /><path d="M9 11q4-6 12-2 3 6-2 10-6 3-9-2-2-3-1-6zM13 12q4-2 6 1" stroke="#b9141c" strokeWidth="1.300" />
    <path d="M27 41l3-4 1 4 3-5 1 4 3-5 2 4 4-6 1 3M46 32l4-4 1 3 4-4 1 3M32 48l3-5 2 4 4-6 2 5 4-6 2 4 5-6 2 3M56 47l4-4 1 3 4-4" stroke="#4b3f8f" strokeWidth="1.500" />
  </G>
);
const tw = { stroke: "#fff", strokeWidth: 1.3 };

const Taskbar = () => (
  <TaskBar>
    <Slot $l={20} $w={20}><G w={20} h={20}><path d="M0 2.800L8.500 1.600v8H0zM9.500 1.400L20 0v9.600H9.500zM0 10.600h8.500v8L0 17.400zM9.500 10.600H20V20L9.500 18.700z" fill="#fff" /></G></Slot>
    <Search>
      <Slot $l={14} $w={20}><G w={20} h={20}><circle cx="12.500" cy="7.500" r="6.600" stroke="#111" strokeWidth="1.500" /><path d="M7.700 12.300L.7 19.300" stroke="#111" strokeWidth="1.500" /></G></Slot>
      <T l={15} w={164} s={18.5} lh={26} c="#3a3a3a">Type here to search</T>
      <Slot $l={54} $w={92}><Rose /></Slot>
    </Search>
    <Slot $l={20} $w={21}><G w={21} h={20}><path d="M.7 0v3.500h12.600V0M2 6h10v8H2zM.7 20v-3.500h12.600V20M18.500 0v4M18.500 10v10" {...tw} /><path d="M17 5.500h3.500v3H17z" fill="#fff" /></G></Slot>
    <TaskSep $l={25} />
    <Slot $l={13} $w={20}><LiftUp><Code s={20} /></LiftUp></Slot>
    <TaskSep $l={166} />
    <AppBtn $l={19}><G w={29} h={27}>
      <defs><linearGradient id="ca" x1="0" y1="0" x2="0" y2="1"><stop offset="0" stopColor="#1a8be0" /><stop offset=".5" stopColor="#35c1b0" /><stop offset="1" stopColor="#ffd21e" /></linearGradient><linearGradient id="cb" x1="1" y1="0" x2="0" y2="1"><stop offset="0" stopColor="#a25ae8" /><stop offset=".5" stopColor="#f0569a" /><stop offset="1" stopColor="#ff9a3c" /></linearGradient></defs>
      <path d="M8 0h11q3 0 4 5h-5q-3 0-4 4l-3 9q-1 3-4 3H4q-5 0-4-5L3 5q1-5 5-5z" fill="url(#ca)" /><path d="M21 27H11q-3 0-3-5h3q3 0 4-4l3-9q1-3 4-3h3q5 0 4 5l-3 11q-1 5-5 5z" fill="url(#cb)" /><path d="M14 0h5q3 0 4 6-4 0-5 3z" fill="#2253c4" />
    </G></AppBtn>
    <AppBtn><G w={28} h={28}>
      <ellipse cx="7" cy="16" rx="6.500" ry="4" fill="#8b8b90" /><ellipse cx="13" cy="7.500" rx="11.500" ry="7" transform="rotate(-20 13 7.500)" fill="#f4f4f4" stroke="#d94343" strokeWidth="1.400" />
      <path d="M11 4l5 15M20 3L5 13M14 9L3 9" stroke="#9a9a9a" strokeWidth="1.500" /><ellipse cx="23" cy="18" rx="4.500" ry="2.800" transform="rotate(20 23 18)" stroke="#2d83bd" strokeWidth="2" /><ellipse cx="18" cy="23.500" rx="3" ry="4.500" stroke="#2d83bd" strokeWidth="2" />
    </G></AppBtn>
    <AppBtn><G w={28} h={27}><path d="M7 1l20 6v14L7 14z" fill="#c8d4dc" /><path d="M8 1.500l18 6v12.500L8 13.500z" fill="#36a4ee" /><path d="M13 17l5 2-3 2-5-2z" fill="#aab4ba" /><path d="M3 19l16 4-4 2.500L0 21zM18 22l4 2-5 2-3-1z" fill="#e4e8ea" /></G></AppBtn>
    <AppBtn $on><PptIcon s={27} /></AppBtn>
    <AppBtn><G w={28} h={27}><path d="M14 3.500h13.500v20H14z" fill="#fff" stroke="#2b579a" /><path d="M17 7.500h8M17 10.500h8M17 13.500h8M17 16.500h8M17 19.500h8" stroke="#2b579a" strokeWidth="1.400" /><path d="M0 3l16-3v27L0 24z" fill="#2b579a" /><path d="M3 9l2 9.500L8 10l3 8.500L13.500 8.500" stroke="#fff" strokeWidth="2" /></G></AppBtn>
    <AppBtn><G w={28} h={24}><path d="M0 1q0-1 1-1h10l2 3v3H0z" fill="#e0a011" /><path d="M0 5h11l2-3h14q1 0 1 1v19q0 1-1 1H0z" fill="#fdd466" /><path d="M5 24V14q0-2 2-2h14q2 0 2 2v10h-4.500v-5h-9v5z" fill="#3a96dd" /></G></AppBtn>
    <AppBtn><G w={31} h={31}>
      <circle cx="15" cy="15" r="15" fill="#fbbc05" /><path d="M2 7.500A15 15 0 0 1 28 7.500H15L8 18z" fill="#ea4335" /><path d="M2 7.500A15 15 0 0 0 15 30l6.500-11L8.500 18.500z" fill="#2f9e4f" />
      <circle cx="15" cy="15" r="7.500" fill="#fff" /><circle cx="15" cy="15" r="5.800" fill="#3b7ded" /><circle cx="23" cy="23" r="7.500" fill="#46302e" /><circle cx="23" cy="20.500" r="1.900" fill="#fff" /><path d="M19.500 26q0-3.500 3.500-3.500t3.500 3.500z" fill="#fff" />
    </G></AppBtn>
    <AppBtn $on><G w={28} h={28}><circle cx="14" cy="14" r="14" fill="#1ed760" /><path d="M5.500 9.500q9-2.500 17.500 2M6.500 14.300q8-2 14.500 2M7.500 18.700q7-1.500 12 1.800" stroke="#1a1a1a" strokeWidth="2.200" strokeLinecap="round" /></G></AppBtn>
    <AppBtn><G w={28} h={23}><path d="M.7.700h26.600v21.600H.7z" fill="#050505" stroke="#99a0a5" strokeWidth="1.400" /><path d="M0 0h28v3H0z" fill="#c9ced1" /><path d="M1.400 3h25.200v5Q12 9 1.400 15z" fill="#333" /><path d="M6 5.500H3.500v3H6M8 6v.5M8 8.500v.5M10 5l2 4M13.500 9h3.500" stroke="#ddd" /></G></AppBtn>
    <AppBtn $on><BraveMark><i /><SiBrave size={30} color="#fb4a1e" /></BraveMark></AppBtn>
    <AppBtn $on><Code s={30} /></AppBtn>

    <Slot $l={174} $w={16}><G w={16} h={9}><path d="M.5 8.500L8 1l7.500 7.500" {...tw} /></G></Slot>
    <Slot $l={12} $w={20}><G w={20} h={13}><path d="M2 9A5 5 0 0 1 6 2q4-4 8 .5L12 8z" fill="#b4b4b8" /><path d="M4 13q-4 0-4-3.500T4 6q2 0 3 1 1-4 6-4t5 4q2.500 1 2.500 3T17 13z" fill="#fff" /></G></Slot>
    <Slot $l={13} $w={13}><G w={13} h={20}><path d="M2.500 0h8v14h-8z" fill="#fff" /><path d="M.6 9.500V15.500h11.800v-6M6.500 15.500V19M3 19.300h7" {...tw} /></G></Slot>
    <Slot $l={17} $w={16}><G w={16} h={16}><path d="M1 15.500A14 14 0 0 1 15.500 1M5 15.500A10.500 10.500 0 0 1 15.500 5.500M9 15.500a6.500 6.500 0 0 1 6.500-6" stroke="#d5d5d8" strokeWidth="1.300" /><circle cx="14" cy="14" r="1.700" fill="#fff" /></G></Slot>
    <Slot $l={11} $w={20}><G w={20} h={15}><path d="M6.500 3.500h11.500v9H4.500V9M18 6h1.800v3.500H18" {...tw} /><path d="M1.500 0v2.500M4.500 0v2.500M.5 2.500h5.500V5L4.500 6.500h-2.500L.5 5zM3.200 6.500v6H5" {...tw} /></G></Slot>
    <Slot $l={10} $w={20}><G w={20} h={16}><path d="M.7 5.500h2.500L7 1.500v13l-3.800-4H.7z" {...tw} /><path d="M9.500 5.500q1.500 2.500 0 5" {...tw} /><path d="M12.500 3.500q3 4.500 0 9M15.500 1q5 7 0 14" stroke="#77777e" strokeWidth="1.300" /></G></Slot>
    <Slot $l={15} $w={20}><G w={20} h={20}><path d="M7 15L14 1.500q2-2 3 0L10.500 14l-4 3zM14 9.500q7-3 5 .5-3 4-6 2M9 9C2 9-1 16 1.500 18.500c4 1 6-2 6-4" {...tw} /></G></Slot>
    <Clock><T w={52} s={14.8} c="#fff" lh={19}>3:12 PM</T><T w={67} s={14.8} c="#fff" lh={19}>1/25/2025</T></Clock>
    <Notice>
      <G w={20} h={19}><path d="M0 0h20v15H8l-4 4v-4H0z" fill="#fff" /><path d="M4 4.500h12M4 7.500h12M4 10.500h9" stroke="#2b2b31" /></G>
      <NoticeCount><T w={7.500} s={13} weight={600} c="#fff" lh={18}>3</T></NoticeCount>
    </Notice>
    <ShowDesktop />
  </TaskBar>
);
const LiftUp = styled.div`
  padding-bottom: 16px;
`;
const BraveMark = styled.div`
  display: grid;
  place-items: center;
  > * { grid-area: 1 / 1; }
  > i { width: 16px; height: 20px; background: #fff; border-radius: 4px 4px 8px 8px; }
`;

export default function App() {
  return (
    <App0>
      <Global />
      <Title />
      <Tabs />
      <Ribbon />
      <Workspace />
      <Status />
      <Taskbar />
    </App0>
  );
}
